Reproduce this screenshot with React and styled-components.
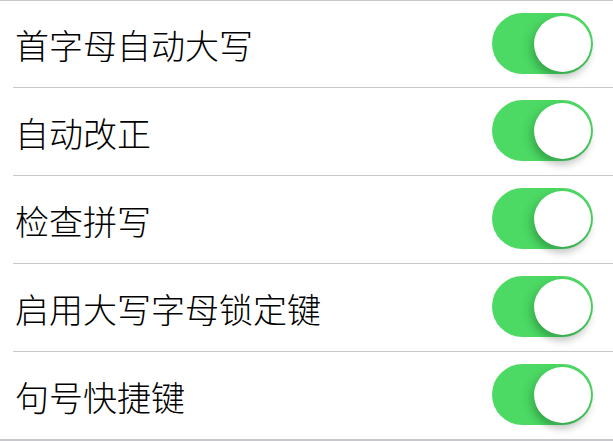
import React from "react";
import styled, { createGlobalStyle } from "styled-components";

const Global = createGlobalStyle`
  body {
    margin: 0;
    background: #ffffff;
    font-family: "Noto Sans CJK SC", "Noto Sans", sans-serif;
  }
`;

const List = styled.div`
  border-top: 1px solid #c8c7cc;
  border-bottom: 2px solid #c8c7cc;
  background: #fff;
`;

const Row = styled.div`
  display: flex;
  align-items: center;
  justify-content: space-between;
  height: 87px;
  padding: 0 20px 0 15px;
  box-sizing: border-box;

  &:first-child {
    height: 86px;
  }
`;

const Separator = styled.div`
  height: 1px;
  margin-left: 13px;
  background: #c8c7cc;
`;

const Label = styled.span`
  font-size: 34px;
  font-weight: 300;
  color: #000;
  line-height: 1;
  margin-top: 2px;
`;

const Track = styled.div`
  position: relative;
  width: 101px;
  height: 61px;
  border-radius: 31px;
  background: ${(p) => (p.$on ? "#4cd964" : "#e5e5ea")};
  margin-top: -2px;
`;

const Knob = styled.div`
  position: absolute;
  top: 3px;
  right: 2px;
  width: 57px;
  height: 56px;
  border-radius: 50%;
  background: #fff;
  box-shadow: -5px 3px 8px rgba(0, 80, 20, 0.18), 0 7px 7px rgba(0, 0, 0, 0.14);
`;

const items = [
  "首字母自动大写",
  "自动改正",
  "检查拼写",
  "启用大写字母锁定键",
  "句号快捷键",
];

function Toggle({ on }) {
  return (
    <Track $on={on}>
      <Knob />
    </Track>
  );
}

export default function App() {
  return (
    <>
      <Global />
      <List>
        {items.map((t, i) => (
          <React.Fragment key={t}>
            {i > 0 && <Separator />}
            <Row>
              <Label>{t}</Label>
              <Toggle on />
            </Row>
          </React.Fragment>
        ))}
      </List>
    </>
  );
}
